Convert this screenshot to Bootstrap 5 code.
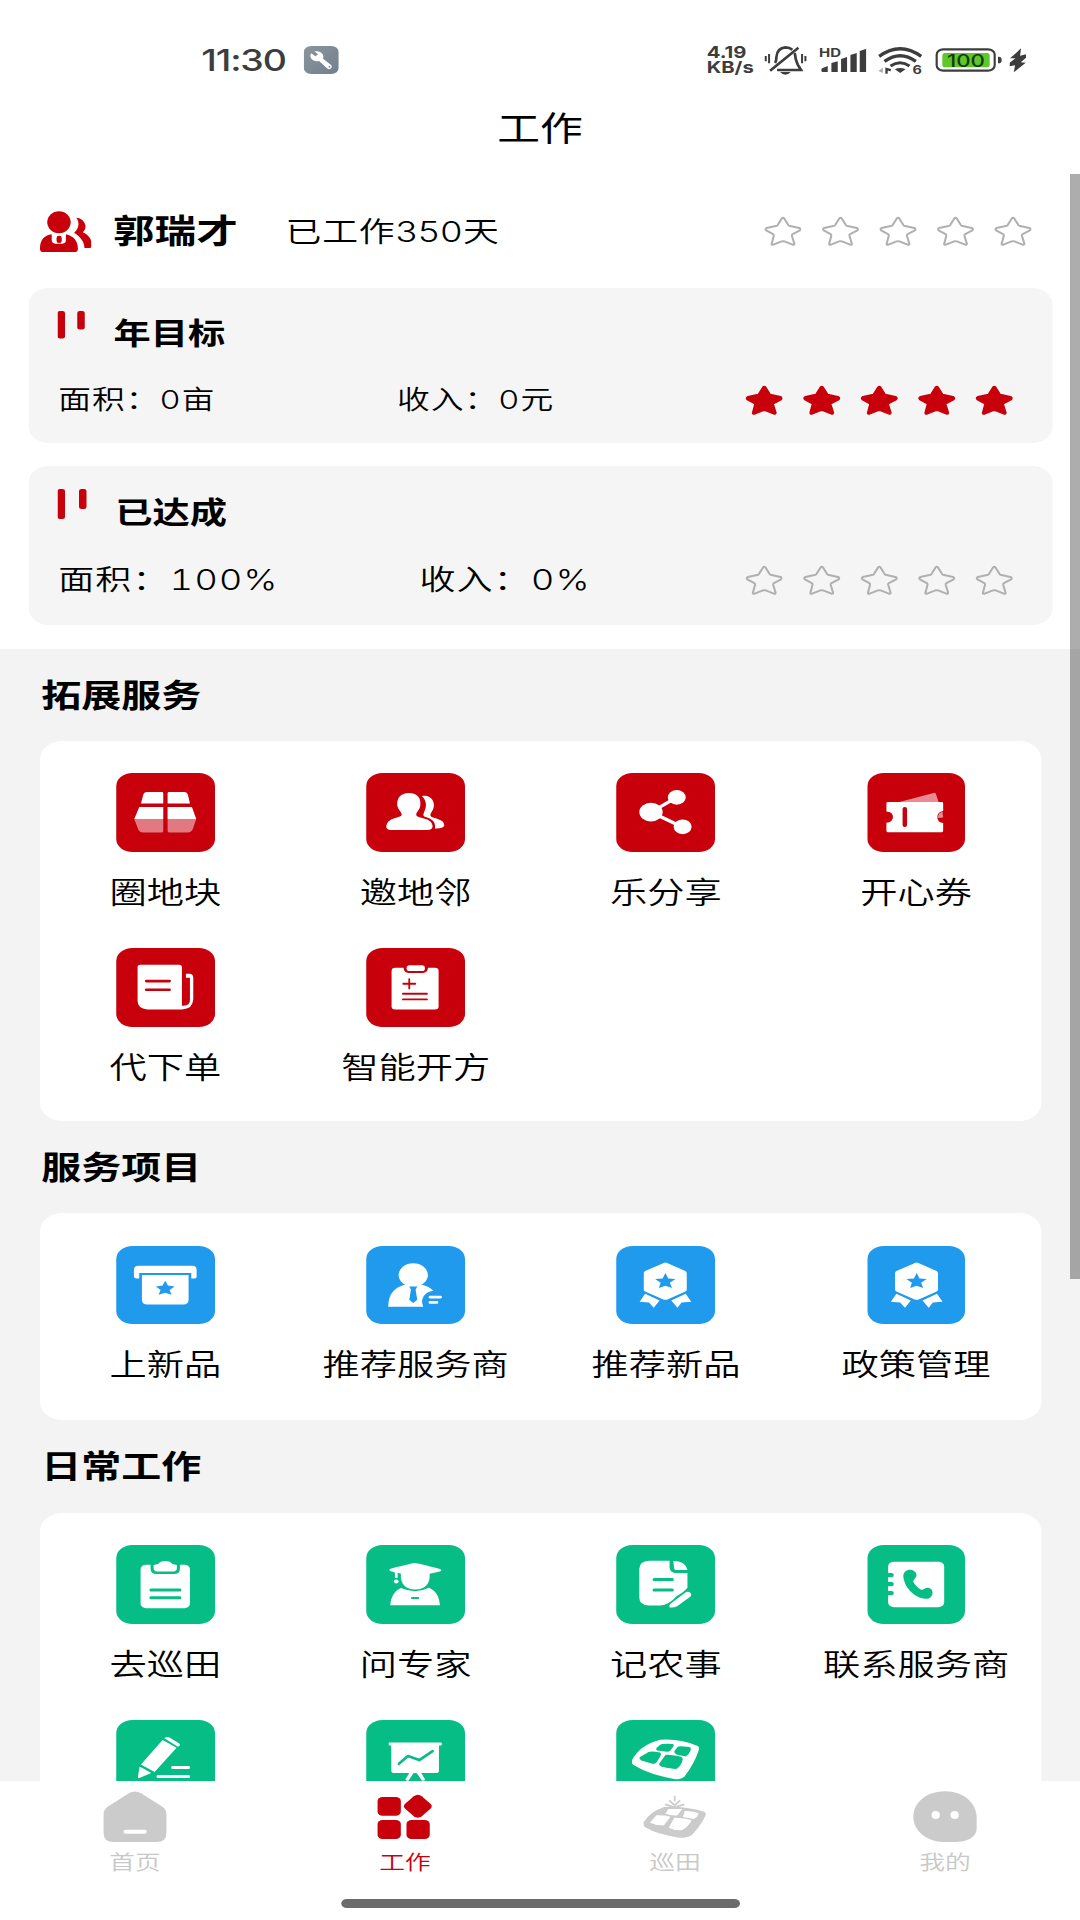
<!DOCTYPE html>
<html lang="zh-CN">
<head>
<meta charset="utf-8">
<meta name="viewport" content="width=device-width, initial-scale=1">
<title>工作</title>
<link href="https://cdn.jsdelivr.net/npm/bootstrap@5.3.0/dist/css/bootstrap.min.css" rel="stylesheet">
<style>
  :root { --brand:#c7000b; --sky:#1f9aed; --leaf:#06bd86; --mute:#cbcbcb; }
  html, body { width:1080px; height:1920px; overflow:hidden; background:#fff; }
  body { font-family:Inter,"Noto Sans CJK SC",sans-serif; color:#000; line-height:1; }
  /* the phone screen is wider than its own grid: everything is stretched sideways */
  .phone { width:864px; height:1920px; transform:scaleX(1.25); transform-origin:0 0; }
  svg { display:block; flex:none; }
  .statusbar { height:100px; padding:20px 43px 0 161px; color:#3d3d3d; }
  .clock { font-size:30px; font-weight:500; width:82px; letter-spacing:-.9px; }
  .speed { width:46px; font-size:16.2px; font-weight:700; line-height:15px; }
  .screen-title { height:74px; padding-bottom:17px; font-size:34.2px; font-weight:400; }
  .main-area { height:1607px; background:#f3f3f3; }
  .summary { height:474.7px; }
  .person-row { height:114px; padding:0 38px 0 32px; }
  .person-name { font-size:33.3px; font-weight:700; width:138px; margin-left:17px; padding-top:2px; }
  .days { font-size:28.7px; font-weight:350; letter-spacing:.65px; padding-top:2px; }
  .stars { gap:15.3px; --line:#b0b0b0; }
  .stars svg { width:30.85px; height:30.7px; fill:none; stroke:var(--line); }
  .stars.full { --line:var(--brand); }
  .stars.full svg { fill:var(--brand); }
  .goal { margin:0 22px 0 23px; background:#f5f5f5; border-radius:16px; }
  .goal-a { height:155px; font-size:26.2px; }
  .goal-b { height:159px; font-size:28.8px; margin-top:23px; }
  .goal-head { height:90px; padding-left:22.8px; }
  .goal-b .goal-head { height:92px; }
  .goal-head svg { margin-top:23px; width:45px; height:30px; }
  .goal-name { font-size:29.8px; font-weight:700; padding-top:2px; }
  .goal-b .goal-name { padding-left:1.5px; padding-top:1px; }
  .goal-line { height:44px; padding:0 31px 0 23.5px; font-weight:350; letter-spacing:.85px; font-variant-numeric:tabular-nums; }
  .goal-a .col-area { width:271px; }
  .goal-b .col-area { width:289px; }
  .goal-b .goal-line { letter-spacing:1px; }
  .section-title { height:92.3px; padding:2px 0 0 33px; font-size:32px; font-weight:700; }
  .panel { margin:0 31px 0 32.3px; padding-top:32.5px; background:#fff; border-radius:18px; }
  .panel-double { height:380.2px; }
  .panel-single { height:207px; }
  .tile { height:174.6px; font-size:29.8px; font-weight:350; }
  .tile svg { width:78.7px; height:78.5px; border-radius:13px; margin-bottom:26px; fill:#fff; }
  .tile span { white-space:nowrap; }
  .red svg { background:var(--brand); --c:var(--brand); }
  .blue svg { background:var(--sky); --c:var(--sky); }
  .green svg { background:var(--leaf); --c:var(--leaf); }
  .cut { fill:var(--c); }
  .ln { fill:none; stroke:var(--c); stroke-linecap:round; stroke-linejoin:round; }
  .tabs { height:139px; background:#fff; }
  .tab { font-size:20.6px; font-weight:350; color:#c8c8c8; padding-top:8px; }
  .tab svg { width:54px; height:56px; fill:var(--mute); margin-bottom:7.5px; }
  .tab.active { color:var(--brand); }
  .tab.active svg { fill:var(--brand); }
  .thumb { right:0; top:174px; width:8px; height:1105px; background:rgba(0,0,0,.32); }
  .home-bar { left:272.5px; bottom:12.5px; width:319px; height:8.5px; background:#6b6b6b; border-radius:5px; }
  .gap-wifi { margin-left:9px; }
  .gap-batt { margin-left:10px; }
  .gap-bolt { margin-left:4.5px; }
</style>
</head>
<body>
<svg width="0" height="0" class="position-absolute">
  <symbol id="star" viewBox="648 78 112 92" preserveAspectRatio="none">
    <path d="M700 86Q704 81 708 86L720 106Q722 108 725 108L751 114Q757 117 753 121L732 132Q729 134 730 138L737 161Q737 165 732 164L708 154Q704 153 700 154L676 164Q670 165 671 161L677 138Q678 134 675 132L655 121Q651 117 656 114L683 108Q686 108 688 106Z" stroke-width="6" stroke-linejoin="round"/>
  </symbol>
  <symbol id="medal" viewBox="222 349 286 235" preserveAspectRatio="none">
    <path d="M360 400Q365 397 370 400L423 424Q427 426 427 431V479Q427 483 423 485L371 509Q365 511 359 509L306 485Q302 483 302 479V431Q302 426 306 424Z"/>
    <path class="cut" d="M365 430L373 446L394 448L378 459L384 475L365 468L346 475L351 459L335 448L357 446Z"/>
    <path d="M306 492L348 512L331 534L317 518L290 516ZM424 492L382 512L400 534L412 518L440 516Z"/>
  </symbol>
</svg>

<div class="phone position-relative overflow-hidden bg-white">
  <header>
    <div class="statusbar d-flex align-items-center">
      <div class="clock">11:30</div>
      <svg width="28" height="28" viewBox="372 48 105 84" preserveAspectRatio="none">
        <defs><linearGradient id="wg" x1="0" y1="0" x2="1" y2="1"><stop offset="0" stop-color="#8b959d"/><stop offset="1" stop-color="#71808e"/></linearGradient></defs>
        <rect x="372" y="48" width="105" height="84" rx="22" ry="18" fill="url(#wg)"/>
        <path d="M394 70L407 79L415 73L404 64Q422 61 430 74Q432 82 430 86L454 105Q459 112 452 116Q446 120 440 113L418 93Q405 96 396 88Q389 80 394 70Z" fill="#fff"/>
        <circle cx="449" cy="110" r="3" fill="#8b959d"/>
      </svg>
      <div class="ms-auto d-flex align-items-center">
        <div class="speed">4.19<br>KB/s</div>
        <svg width="35.2" height="30.7" viewBox="222 44 132 92" preserveAspectRatio="none" fill="none" stroke="#3d3d3d">
          <path d="M228 77V93M238 71V99M337 71V99M347 77V93" stroke-width="6"/>
          <path d="M256 98Q260 92 260 80Q262 53 287 51Q300 51 308 58M315 68Q317 88 324 103Q330 112 334 119H262" stroke-width="8"/>
          <path d="M326 52L241 121" stroke-width="8"/>
          <path d="M271 125H303Q296 133 287 133Q278 133 271 125Z" fill="#3d3d3d" stroke="none"/>
        </svg>
        <svg class="ms-2" width="38.4" height="30.7" viewBox="384 44 144 92" preserveAspectRatio="none" fill="#3d3d3d">
          <text x="385" y="80" font-size="34" font-weight="700" textLength="66" lengthAdjust="spacingAndGlyphs">HD</text>
          <path d="M392 117Q392 114 396 113L411 107V125H396Q392 125 392 121ZM422 98L441 93V125H422ZM451 86L469 80V125H451ZM479 74L498 68V125H479ZM507 62L527 55V125H507Z"/>
        </svg>
        <svg class="gap-wifi" width="36.3" height="30.7" viewBox="562 44 136 92" preserveAspectRatio="none" fill="none" stroke="#3d3d3d">
          <path d="M567 78Q630 32 693 78" stroke-width="10"/>
          <path d="M583 93Q630 59 677 93" stroke-width="10"/>
          <path d="M601 107Q630 87 658 107" stroke-width="9"/>
          <path d="M614 117Q630 109 646 117L630 128Z" fill="#3d3d3d" stroke="none"/>
          <path d="M589 130V116L602 119" stroke-width="7"/>
          <path d="M578 112V128L565 122Z" fill="#aaa" stroke="none"/>
          <text x="667" y="131" font-size="34" font-weight="700" fill="#3d3d3d" stroke="none" textLength="28" lengthAdjust="spacingAndGlyphs">6</text>
        </svg>
        <svg class="gap-batt" width="53.9" height="30.7" viewBox="736 44 202 92" preserveAspectRatio="none">
          <rect x="741" y="57" width="174" height="64" rx="20" ry="16" fill="#fff" stroke="#3d3d3d" stroke-width="6.5"/>
          <rect x="758" y="68" width="142" height="43" rx="8" fill="#5fc62b"/>
          <path d="M925 79Q936 78 936 89Q936 100 925 99Z" fill="#3d3d3d"/>
          <text x="772" y="109" font-size="50" font-weight="500" fill="#173c0c" textLength="114" lengthAdjust="spacingAndGlyphs">100</text>
        </svg>
        <svg class="gap-bolt" width="14.4" height="30.7" viewBox="955 44 54 92" preserveAspectRatio="none" fill="#3d3d3d">
          <path d="M992 54L989 76L1007 72V82L991 96L1006 97L970 126L974 105L958 108V97L975 84H959Z"/>
        </svg>
      </div>
    </div>
    <h1 class="screen-title d-flex align-items-center justify-content-center m-0">工作</h1>
  </header>

  <main class="main-area overflow-hidden">
    <div class="summary bg-white">
      <div class="person-row d-flex align-items-center">
        <svg width="41.4" height="41" viewBox="58 63 150 123" preserveAspectRatio="none" fill="#c7000b">
          <ellipse cx="113" cy="97" rx="34" ry="33"/>
          <path d="M58 176C58 150 70 136 92 133V151Q93 161 102 161H123Q133 161 133 151V133C156 138 168 154 168 176Q168 186 158 186H68Q58 186 58 176Z"/>
          <rect x="106" y="137" width="15" height="22" rx="7"/>
          <path d="M163 83C185 84 200 110 182 127C200 135 209 150 208 167Q208 174 200 174H187C186 155 178 143 157 128C172 115 173 95 163 83Z"/>
        </svg>
        <div class="person-name">郭瑞才</div>
        <div class="days">已工作350天</div>
        <div class="stars d-flex ms-auto">
          <svg><use href="#star"/></svg><svg><use href="#star"/></svg><svg><use href="#star"/></svg><svg><use href="#star"/></svg><svg><use href="#star"/></svg>
        </div>
      </div>

      <section class="goal goal-a">
        <div class="goal-head d-flex align-items-center">
          <svg class="align-self-start" viewBox="0 0 45 30" fill="#c7000b"><rect width="6" height="27.5" rx="2"/><rect x="15.8" width="6" height="18.5" rx="2"/></svg>
          <div class="goal-name">年目标</div>
        </div>
        <div class="goal-line d-flex align-items-center">
          <div class="col-area">面积：0亩</div>
          <div>收入：0元</div>
          <div class="stars full d-flex ms-auto">
            <svg><use href="#star"/></svg><svg><use href="#star"/></svg><svg><use href="#star"/></svg><svg><use href="#star"/></svg><svg><use href="#star"/></svg>
          </div>
        </div>
      </section>

      <section class="goal goal-b">
        <div class="goal-head d-flex align-items-center">
          <svg class="align-self-start" viewBox="0 0 45 30" fill="#c7000b"><rect width="6" height="30" rx="2"/><rect x="17.2" width="6" height="20" rx="2"/></svg>
          <div class="goal-name">已达成</div>
        </div>
        <div class="goal-line d-flex align-items-center">
          <div class="col-area">面积：100%</div>
          <div>收入：0%</div>
          <div class="stars d-flex ms-auto">
            <svg><use href="#star"/></svg><svg><use href="#star"/></svg><svg><use href="#star"/></svg><svg><use href="#star"/></svg><svg><use href="#star"/></svg>
          </div>
        </div>
      </section>
    </div>

    <h2 class="section-title d-flex align-items-center m-0">拓展服务</h2>
    <div class="panel panel-double red"><div class="row g-0">
      <div class="col-3 tile d-flex flex-column align-items-center">
        <svg viewBox="259 129 295 235" preserveAspectRatio="none">
          <path d="M350 186H396Q400 186 400 190V220H333L340 194Q342 186 350 186ZM413 190Q413 186 417 186H464Q472 186 474 194L480 220H413ZM328 231H400V267H313ZM413 231H486L499 267H413Z"/>
          <path fill="#e27880" d="M313 267H400V303Q400 307 396 307H340Q329 307 325 298ZM413 267H499L488 298Q484 307 473 307H417Q413 307 413 303Z"/>
        </svg><span>圈地块</span>
      </div>
      <div class="col-3 tile d-flex flex-column align-items-center">
        <svg viewBox="1011 129 295 235" preserveAspectRatio="none">
          <path d="M1178 198C1204 192 1220 215 1212 236C1208 247 1202 250 1204 258C1210 266 1246 266 1245 286Q1242 296 1217 295C1222 272 1202 264 1185 259C1178 252 1188 245 1190 226Q1190 209 1178 198Z"/>
          <path d="M1139 189C1166 189 1176 206 1173 227C1171 242 1157 248 1162 257C1172 267 1206 262 1210 287Q1210 300 1194 300H1086Q1070 300 1071 287C1076 262 1105 266 1117 256C1120 247 1107 241 1104 226C1102 205 1114 189 1139 189Z"/>
        </svg><span>邀地邻</span>
      </div>
      <div class="col-3 tile d-flex flex-column align-items-center">
        <svg viewBox="222 129 286 235" preserveAspectRatio="none">
          <path d="M398 202L323 246L414 291" fill="none" stroke="#fff" stroke-width="10"/>
          <ellipse cx="323" cy="246" rx="34" ry="28"/><ellipse cx="398" cy="202" rx="26" ry="22"/><ellipse cx="415" cy="290" rx="26" ry="22"/>
        </svg><span>乐分享</span>
      </div>
      <div class="col-3 tile d-flex flex-column align-items-center">
        <svg viewBox="950 129 286 235" preserveAspectRatio="none">
          <path fill="#e98b92" d="M1037 217L1142 189Q1147 187 1149 192L1157 217Z"/>
          <path d="M1009 216H1166Q1170 216 1170 220V243Q1153 246 1153 261Q1153 277 1170 279V302Q1170 306 1166 306H1009Q1005 306 1005 302V278Q1024 277 1024 261Q1024 245 1005 244V220Q1005 216 1009 216Z"/>
          <path fill="#e98b92" d="M1154 264Q1155 248 1168 245L1170 262Z"/>
          <rect class="cut" x="1052" y="231" width="13" height="60" rx="6"/>
        </svg><span>开心券</span>
      </div>
      <div class="col-3 tile d-flex flex-column align-items-center">
        <svg viewBox="259 653 295 235" preserveAspectRatio="none">
          <path d="M331 703H448Q456 703 456 711V826Q482 828 480 805V742H468V730H480Q490 731 490 742V806Q489 836 456 837H352Q323 835 323 812V711Q323 703 331 703Z"/>
          <path class="ln" d="M349 752H419M349 778H419" stroke-width="8"/>
        </svg><span>代下单</span>
      </div>
      <div class="col-3 tile d-flex flex-column align-items-center">
        <svg viewBox="1011 653 295 235" preserveAspectRatio="none">
          <rect x="1087" y="712" width="141" height="125" rx="11" ry="9"/>
          <rect class="cut" x="1123" y="698" width="73" height="30" rx="15"/>
          <rect x="1132" y="705" width="55" height="17" rx="9"/>
          <path class="ln" d="M1122 760H1158M1140 746V774M1121 790H1193M1121 807H1193" stroke-width="5.5"/>
        </svg><span>智能开方</span>
      </div>
    </div></div>

    <h2 class="section-title d-flex align-items-center m-0">服务项目</h2>
    <div class="panel panel-single blue"><div class="row g-0">
      <div class="col-3 tile d-flex flex-column align-items-center">
        <svg viewBox="259 349 295 235" preserveAspectRatio="none">
          <path d="M326 408H487Q500 408 500 420V441Q500 446 494 446H484V430H328V446H320Q312 446 312 438V420Q312 408 326 408Z"/>
          <path d="M336 436H476V510Q476 524 460 524H352Q336 524 336 510Z"/>
          <path class="cut" d="M406 453L414 467L434 470L419 481L425 495L406 489L386 495L392 481L378 470L398 467Z"/>
        </svg><span>上新品</span>
      </div>
      <div class="col-3 tile d-flex flex-column align-items-center">
        <svg viewBox="1011 349 295 235" preserveAspectRatio="none">
          <ellipse cx="1152" cy="436" rx="44" ry="35"/>
          <path d="M1077 531C1077 492 1096 473 1126 465H1178C1192 468 1204 474 1212 483C1184 488 1172 507 1182 531Z"/>
          <path d="M1132 455H1172V475H1132Z"/>
          <path class="cut" d="M1140 470H1164L1159 480L1164 510L1152 520L1140 510L1145 480Z"/>
          <rect x="1198" y="498" width="40" height="8" rx="4"/><rect x="1198" y="514" width="29" height="8" rx="4"/>
        </svg><span>推荐服务商</span>
      </div>
      <div class="col-3 tile d-flex flex-column align-items-center">
        <svg><use href="#medal"/></svg><span>推荐新品</span>
      </div>
      <div class="col-3 tile d-flex flex-column align-items-center">
        <svg><use href="#medal"/></svg><span>政策管理</span>
      </div>
    </div></div>

    <h2 class="section-title d-flex align-items-center m-0">日常工作</h2>
    <div class="panel panel-double green"><div class="row g-0">
      <div class="col-3 tile d-flex flex-column align-items-center">
        <svg viewBox="259 165 295 235" preserveAspectRatio="none">
          <rect x="332" y="224" width="148" height="130" rx="16" ry="13"/>
          <path class="cut" d="M362 222H450V236Q450 252 432 252H380Q362 252 362 236Z"/>
          <path d="M371 225L385 222Q390 213 406 213Q422 213 427 222L441 225V234Q441 244 430 244H382Q371 244 371 234Z"/>
          <path class="ln" d="M363 300H450M363 323H450" stroke-width="9"/>
        </svg><span>去巡田</span>
      </div>
      <div class="col-3 tile d-flex flex-column align-items-center">
        <svg viewBox="1011 165 295 235" preserveAspectRatio="none">
          <path d="M1158 219Q1164 219 1232 237Q1240 241 1232 244L1201 251C1204 282 1186 298 1158 298C1130 298 1112 282 1115 251L1105 248V264H1097V247L1083 243Q1077 239 1084 236Q1150 219 1158 219Z"/>
          <ellipse cx="1101" cy="274" rx="7" ry="6"/>
          <path d="M1083 345C1086 318 1096 302 1115 294Q1158 313 1199 293C1220 302 1230 319 1232 345Z"/>
          <path class="ln" d="M1148 324H1167" stroke-width="6"/>
        </svg><span>问专家</span>
      </div>
      <div class="col-3 tile d-flex flex-column align-items-center">
        <svg viewBox="222 165 286 235" preserveAspectRatio="none">
          <path d="M318 212H377V233Q379 249 397 249H429V293Q420 305 398 318Q374 346 350 346H318Q289 345 289 322V236Q289 213 318 212Z"/>
          <path d="M388 213Q424 213 429 240H399Q390 240 390 232ZM422 308Q430 302 438 309Q443 316 436 321L399 348Q393 352 377 352Q374 347 380 341Z"/>
          <path class="ln" d="M332 268H385M332 300H385" stroke-width="9"/>
        </svg><span>记农事</span>
      </div>
      <div class="col-3 tile d-flex flex-column align-items-center">
        <svg viewBox="950 165 286 235" preserveAspectRatio="none">
          <rect x="1010" y="215" width="163" height="136" rx="17" ry="14"/>
          <path class="ln" d="M1008 255H1020M1008 282H1020M1008 309H1020" stroke-width="13"/>
          <path class="cut" d="M1054 257C1056 235 1085 233 1092 251C1095 264 1082 268 1083 275C1088 285 1099 295 1106 299C1115 300 1117 291 1127 293C1144 296 1143 320 1126 326C1088 328 1056 292 1054 257Z"/>
        </svg><span>联系服务商</span>
      </div>
      <div class="col-3 tile d-flex flex-column align-items-center">
        <svg viewBox="259 687 295 235" preserveAspectRatio="none">
          <path d="M398 747L440 770L374 843L333 820ZM403 742L409 738Q414 737 420 740L448 757Q452 761 449 764L444 767ZM329 826L364 846L328 861Q323 862 324 857Z"/>
          <rect x="424" y="825" width="56" height="9" rx="4"/><rect x="380" y="852" width="100" height="9" rx="4"/>
        </svg>
      </div>
      <div class="col-3 tile d-flex flex-column align-items-center">
        <svg viewBox="1011 687 295 235" preserveAspectRatio="none">
          <path d="M1080 754H1236Q1240 758 1236 763H1229V838Q1229 846 1220 846H1176L1188 866Q1182 870 1178 868L1162 846H1153L1138 868Q1132 870 1128 865L1140 846H1096Q1086 846 1086 838V763H1080Q1076 758 1080 754Z"/>
          <path class="ln" d="M1109 818L1136 795L1170 807L1210 780" stroke-width="8"/>
        </svg>
      </div>
      <div class="col-3 tile d-flex flex-column align-items-center">
        <svg viewBox="222 687 286 235" preserveAspectRatio="none">
          <path d="M268 807Q290 762 350 746Q410 742 459 765Q465 768 461 780Q448 820 420 857Q410 866 394 864Q320 852 272 822Q266 818 268 807Z"/>
          <path class="cut" d="M349 762Q354 757 386 759Q391 761 389 765L379 779Q376 782 370 782L341 778Q336 775 339 771ZM401 767Q404 764 434 768Q441 771 438 778Q434 791 424 796L397 790Q389 785 391 780ZM316 783Q323 779 349 784Q354 787 351 794L339 814Q335 819 327 818L295 808Q287 803 291 798ZM365 792Q372 789 408 796Q417 799 415 807Q411 824 398 833Q390 835 355 827Q345 823 347 817Z"/>
        </svg>
      </div>
    </div></div>
  </main>

  <nav class="tabs row g-0">
    <div class="col-3 tab d-flex flex-column align-items-center">
      <svg viewBox="214 897 203 168" preserveAspectRatio="none">
        <path d="M297 910Q315 899 334 910L399 951Q410 960 410 972V1028Q410 1056 380 1056H251Q221 1056 221 1028V972Q221 960 232 951Z"/>
        <rect x="281" y="1019" width="70" height="12" rx="6" fill="#fff"/>
      </svg><span>首页</span>
    </div>
    <div class="col-3 tab active d-flex flex-column align-items-center">
      <svg viewBox="1024 897 203 168" preserveAspectRatio="none">
        <rect x="1043" y="921" width="70" height="56" rx="15" ry="12"/><rect x="1043" y="990" width="70" height="57" rx="15" ry="12"/><rect x="1130" y="990" width="70" height="57" rx="15" ry="12"/>
        <path d="M1152 919Q1164 910 1176 919L1202 941Q1210 948 1202 956L1176 979Q1164 987 1152 979L1126 956Q1118 948 1126 941Z"/>
      </svg><span>工作</span>
    </div>
    <div class="col-3 tab d-flex flex-column align-items-center">
      <svg viewBox="294 897 196 168" preserveAspectRatio="none">
        <path d="M301 996Q320 965 360 951Q420 948 477 965Q484 969 480 978Q466 1008 440 1036Q428 1045 405 1043Q340 1034 306 1012Q299 1007 301 996Z"/>
        <path fill="#fff" d="M373 957H413L399 976Q380 977 364 971ZM420 963Q450 963 461 971Q457 982 446 987L415 981ZM338 976Q362 975 379 980L360 1006Q337 1007 319 998ZM390 983Q420 983 440 991Q432 1010 412 1021Q390 1022 374 1013Z"/>
        <path d="M391 917V934M375 931L391 946L407 931M363 943L391 952L419 943" fill="none" stroke="#cbcbcb" stroke-width="5"/>
      </svg><span>巡田</span>
    </div>
    <div class="col-3 tab d-flex flex-column align-items-center">
      <svg viewBox="1078 897 196 168" preserveAspectRatio="none">
        <path d="M1084 980C1084 938 1122 904 1176 904C1230 904 1268 940 1268 984V1016C1268 1040 1240 1056 1205 1056H1176C1122 1056 1084 1022 1084 980Z"/>
        <ellipse cx="1149" cy="975" rx="12" ry="12" fill="#fff"/><ellipse cx="1204" cy="975" rx="12" ry="12" fill="#fff"/>
      </svg><span>我的</span>
    </div>
  </nav>
  <div class="thumb position-absolute"></div>
  <div class="home-bar position-absolute"></div>
</div>
<script src="https://cdn.jsdelivr.net/npm/bootstrap@5.3.0/dist/js/bootstrap.bundle.min.js"></script>
</body>
</html>
